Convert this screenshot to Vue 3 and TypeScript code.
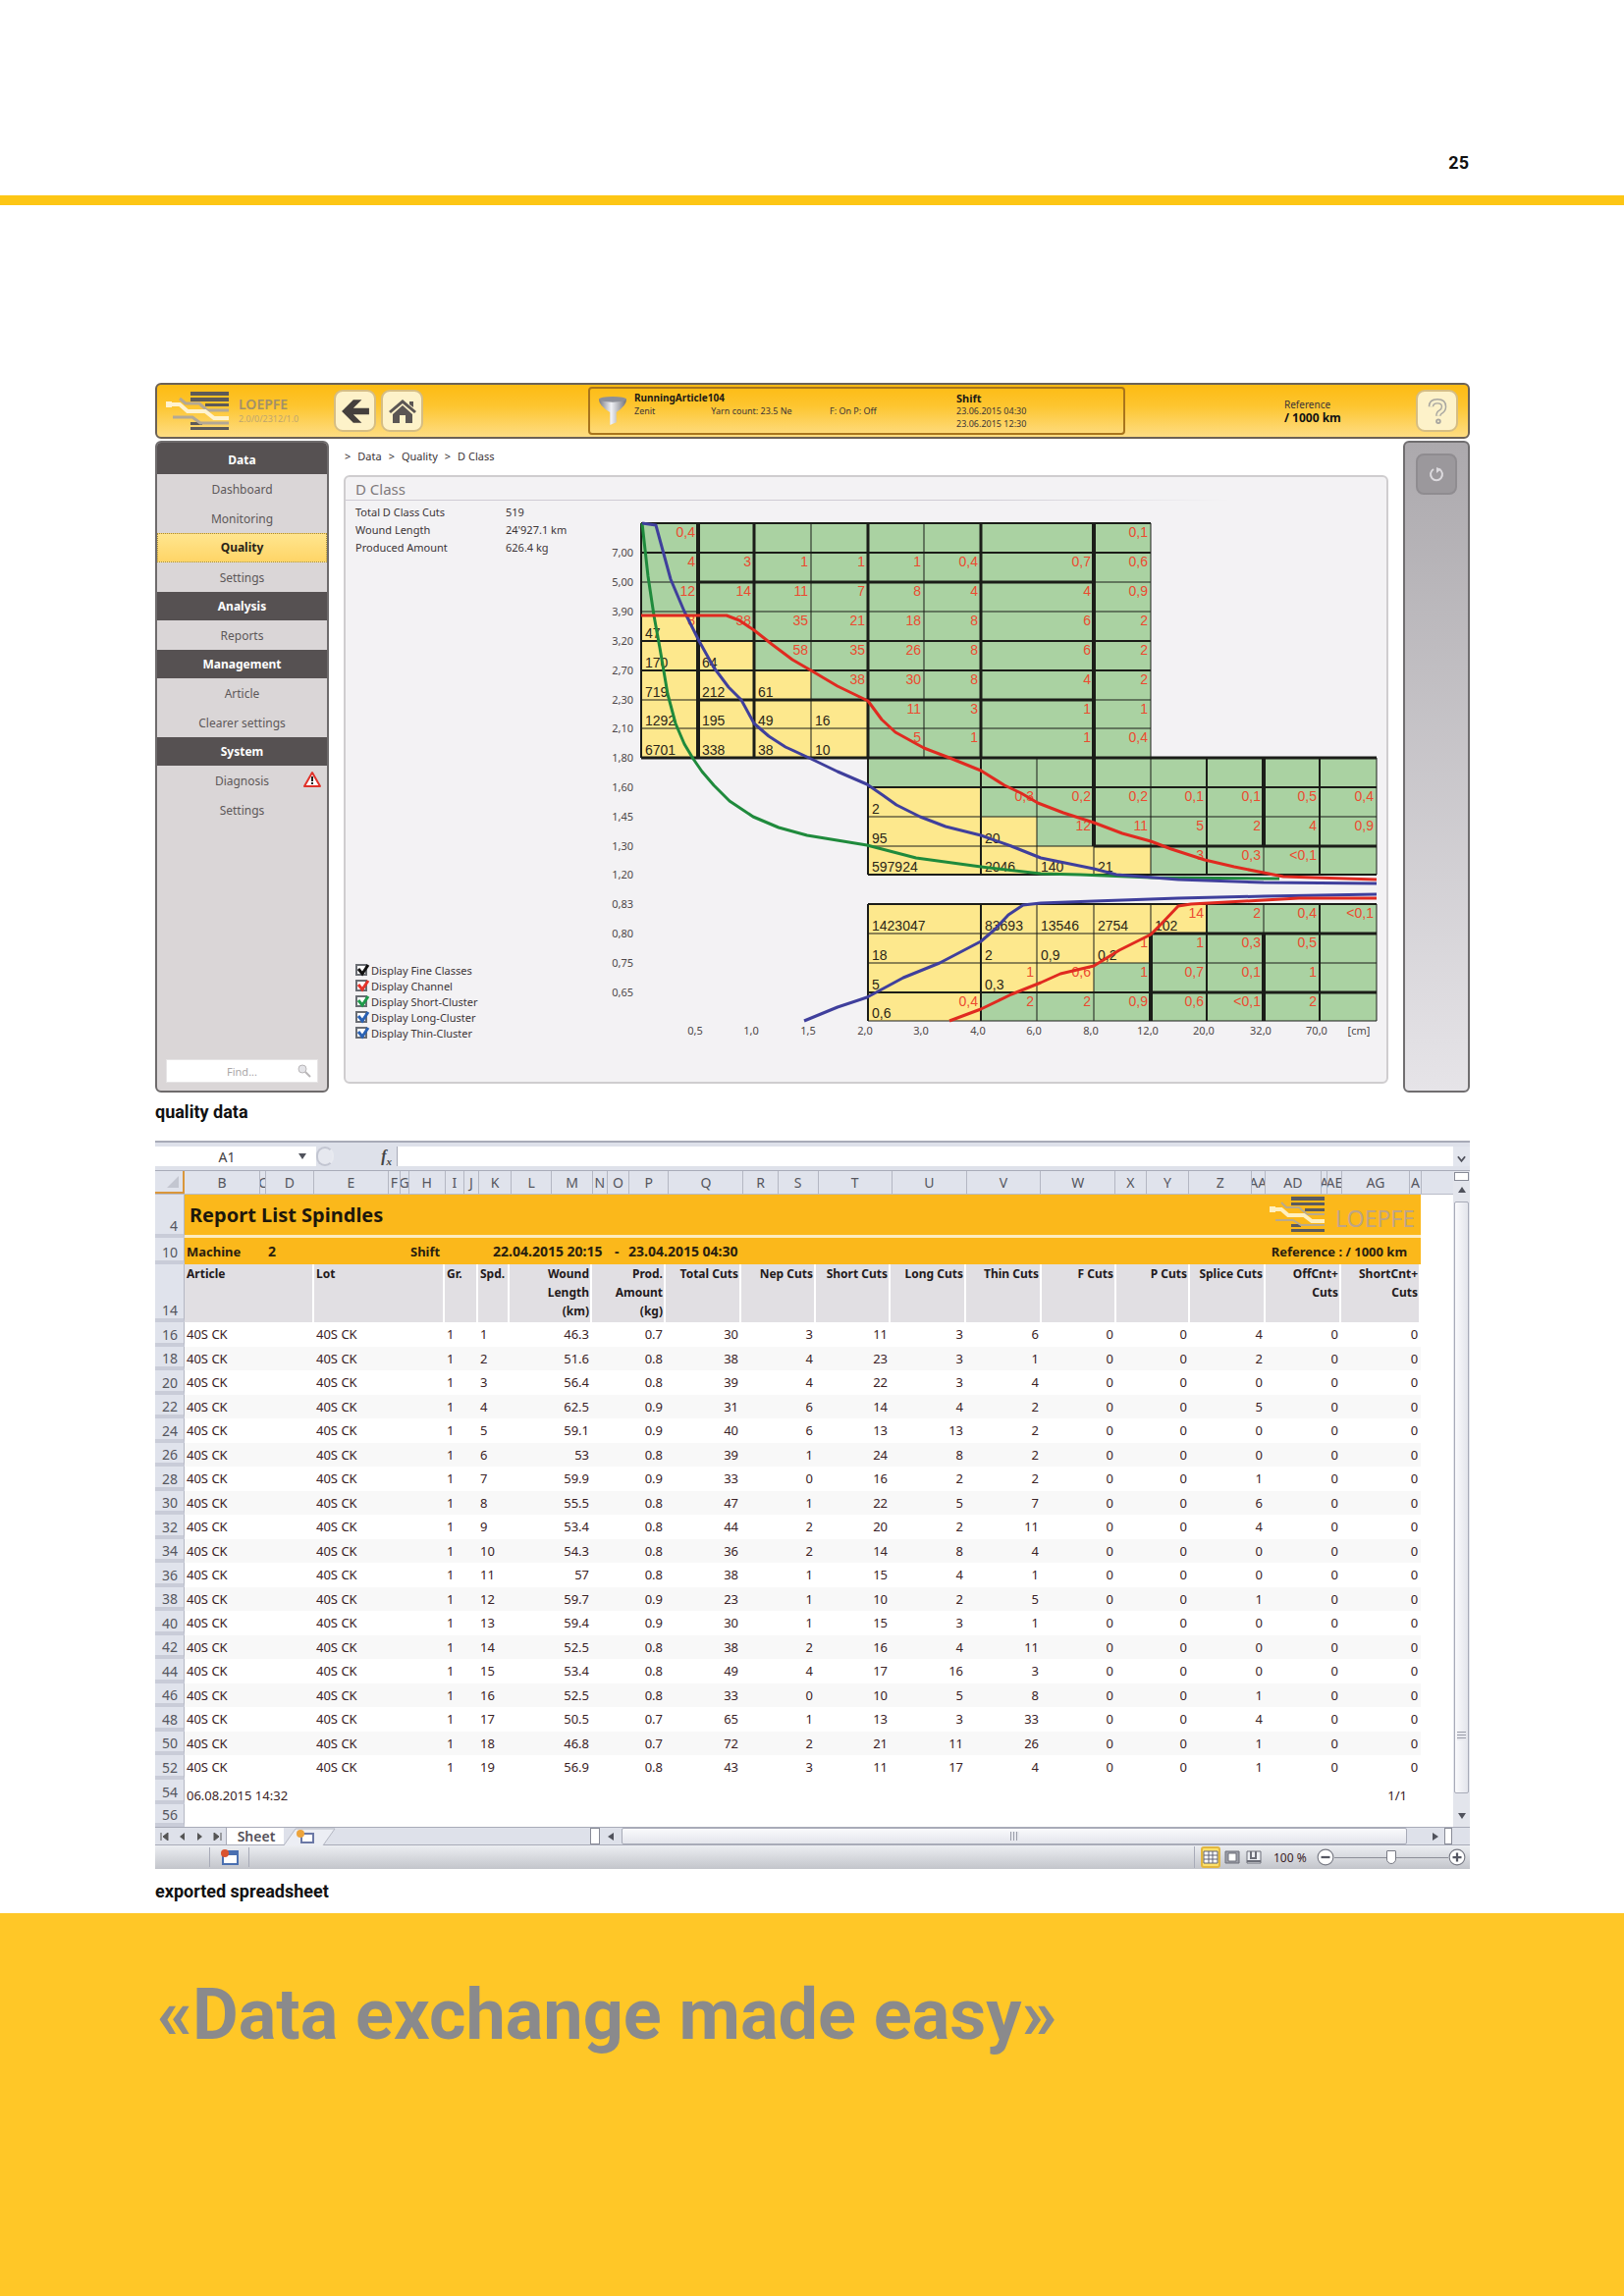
<script setup lang="ts">
import { ref } from 'vue'

interface NavItem { label: string; active?: boolean; warn?: boolean }
interface NavGroup { title: string; items: NavItem[] }

const nav: NavGroup[] = [
  { title: 'Data', items: [{ label: 'Dashboard' }, { label: 'Monitoring' }, { label: 'Quality', active: true }, { label: 'Settings' }] },
  { title: 'Analysis', items: [{ label: 'Reports' }] },
  { title: 'Management', items: [{ label: 'Article' }, { label: 'Clearer settings' }] },
  { title: 'System', items: [{ label: 'Diagnosis', warn: true }, { label: 'Settings' }] },
]

const totals = [
  ['Total D Class Cuts', '519'],
  ['Wound Length', "24'927.1 km"],
  ['Produced Amount', '626.4 kg'],
]

const layers = ref([
  { label: 'Display Fine Classes', color: '#111111', on: true },
  { label: 'Display Channel', color: '#e5352c', on: true },
  { label: 'Display Short-Cluster', color: '#1f9a4a', on: true },
  { label: 'Display Long-Cluster', color: '#2a62b5', on: true },
  { label: 'Display Thin-Cluster', color: '#2a62b5', on: true },
])

// Chart geometry: column edges and row edges of the class matrix
const X = [53, 111, 168, 226, 284, 341, 399, 456, 514, 572, 629, 687, 744, 802]
const Y = [23, 53, 83, 113, 143, 173, 203, 232, 262, 292, 322, 352, 381, 411, 441, 471, 501, 530]

const yLabels = ['7,00', '5,00', '3,90', '3,20', '2,70', '2,30', '2,10', '1,80', '1,60', '1,45', '1,30', '1,20', '0,83', '0,80', '0,75', '0,65']
const xLabels = ['0,5', '1,0', '1,5', '2,0', '3,0', '4,0', '6,0', '8,0', '12,0', '20,0', '32,0', '70,0']

type Box = [number, number, number, number] // x1, y1, x2, y2
const greens: Box[] = [[53, 23, 572, 262], [284, 262, 802, 381], [284, 411, 802, 530]]
const yellows: Box[] = [
  [53, 117, 111, 262], [111, 143, 168, 262], [168, 173, 226, 262], [226, 203, 284, 262],
  [284, 292, 399, 381], [399, 322, 456, 381], [456, 352, 572, 381],
  [284, 411, 629, 441], [284, 441, 572, 471], [284, 471, 514, 501], [284, 501, 399, 530],
]

type Line = [number, number, number, number, number] // x1, y1, x2, y2, stroke width
const lines: Line[] = [
  [53, 23, 53, 262, 2], [111, 23, 111, 262, 4], [168, 23, 168, 262, 3], [226, 23, 226, 262, 1], [284, 23, 284, 262, 3],
  [341, 23, 341, 262, 1], [399, 23, 399, 262, 3], [514, 23, 514, 352, 4], [572, 23, 572, 262, 1],
  [53, 23, 572, 23, 2], [53, 53, 572, 53, 2], [53, 83, 111, 83, 1], [111, 83, 514, 83, 3], [514, 83, 572, 83, 1],
  [53, 113, 572, 113, 1], [53, 143, 572, 143, 2], [53, 173, 572, 173, 2], [53, 203, 111, 203, 1], [111, 203, 514, 203, 3],
  [514, 203, 572, 203, 1], [53, 232, 572, 232, 1], [53, 262, 802, 262, 3],
  [284, 262, 284, 381, 2], [399, 262, 399, 381, 2], [456, 262, 456, 381, 1], [514, 352, 514, 381, 1], [572, 262, 572, 381, 1],
  [629, 262, 629, 381, 2], [687, 262, 687, 352, 4], [687, 352, 687, 381, 1], [744, 262, 744, 381, 2], [802, 262, 802, 381, 1],
  [284, 292, 802, 292, 2], [284, 322, 802, 322, 1], [284, 352, 514, 352, 1], [514, 352, 802, 352, 3], [284, 381, 802, 381, 2],
  [284, 411, 284, 530, 2], [399, 411, 399, 530, 2], [456, 411, 456, 530, 1], [514, 411, 514, 530, 1], [572, 411, 572, 441, 1],
  [572, 441, 572, 530, 4], [629, 411, 629, 530, 2], [687, 411, 687, 441, 1], [687, 441, 687, 530, 4], [744, 411, 744, 530, 2],
  [802, 411, 802, 530, 1],
  [284, 411, 802, 411, 2], [284, 441, 572, 441, 1], [572, 441, 802, 441, 3], [284, 471, 802, 471, 1], [284, 501, 572, 501, 2],
  [572, 501, 802, 501, 3], [284, 530, 802, 530, 1],
]

// Cut counts: [row, [right column edge, value]...]
const cuts: [number, [number, string][]][] = [
  [0, [[1, '0,4'], [9, '0,1']]],
  [1, [[1, '4'], [2, '3'], [3, '1'], [4, '1'], [5, '1'], [6, '0,4'], [8, '0,7'], [9, '0,6']]],
  [2, [[1, '12'], [2, '14'], [3, '11'], [4, '7'], [5, '8'], [6, '4'], [8, '4'], [9, '0,9']]],
  [3, [[1, '8'], [2, '38'], [3, '35'], [4, '21'], [5, '18'], [6, '8'], [8, '6'], [9, '2']]],
  [4, [[3, '58'], [4, '35'], [5, '26'], [6, '8'], [8, '6'], [9, '2']]],
  [5, [[4, '38'], [5, '30'], [6, '8'], [8, '4'], [9, '2']]],
  [6, [[5, '11'], [6, '3'], [8, '1'], [9, '1']]],
  [7, [[5, '5'], [6, '1'], [8, '1'], [9, '0,4']]],
  [9, [[7, '0,3'], [8, '0,2'], [9, '0,2'], [10, '0,1'], [11, '0,1'], [12, '0,5'], [13, '0,4']]],
  [10, [[8, '12'], [9, '11'], [10, '5'], [11, '2'], [12, '4'], [13, '0,9']]],
  [11, [[10, '3'], [11, '0,3'], [12, '<0,1']]],
  [13, [[10, '14'], [11, '2'], [12, '0,4'], [13, '<0,1']]],
  [14, [[9, '1'], [10, '1'], [11, '0,3'], [12, '0,5']]],
  [15, [[7, '1'], [8, '0,6'], [9, '1'], [10, '0,7'], [11, '0,1'], [12, '1']]],
  [16, [[6, '0,4'], [7, '2'], [8, '2'], [9, '0,9'], [10, '0,6'], [11, '<0,1'], [12, '2']]],
]

// Remaining faults: [row, [left column edge, value]...]
const faults: [number, [number, string][]][] = [
  [3, [[0, '47']]],
  [4, [[0, '170'], [1, '64']]],
  [5, [[0, '719'], [1, '212'], [2, '61']]],
  [6, [[0, '1292'], [1, '195'], [2, '49'], [3, '16']]],
  [7, [[0, '6701'], [1, '338'], [2, '38'], [3, '10']]],
  [9, [[4, '2']]],
  [10, [[4, '95'], [6, '20']]],
  [11, [[4, '597924'], [6, '2046'], [7, '140'], [8, '21']]],
  [13, [[4, '1423047'], [6, '83693'], [7, '13546'], [8, '2754'], [9, '102']]],
  [14, [[4, '18'], [6, '2'], [7, '0,9'], [8, '0,2']]],
  [15, [[4, '5'], [6, '0,3']]],
  [16, [[4, '0,6']]],
]

const curves = [
  { c: '#1f8a3c', p: '54,23 60,77 66,117 72,150 80,197 88,227 97,248 106,263 115,276 127,290 143,306 167,322 193,333 222,341 283,351 333,364 399,373 460,380 500,381 573,384 687,385 703,385' },
  { c: '#3f3f9c', p: '54,23 68,25 83,80 97,113 112,143 127,170 142,190 155,203 168,227 183,240 200,251 226,263 253,276 283,289 299,300 313,310 337,322 363,332 399,341 430,352 460,364 514,375 537,381 600,386 687,389 802,390' },
  { c: '#e02a20', p: '53,117 140,117 153,122 168,132 187,147 207,162 226,173 253,189 284,204 298,223 312,236 341,252 367,262 399,275 423,290 440,298 457,308 483,318 514,328 543,339 572,347 593,355 627,366 657,373 687,379 707,383 802,386' },
  { c: '#3f3f9c', p: '219,530 253,516 283,506 320,486 357,471 399,449 413,437 427,422 442,412 460,410 514,408 600,405 687,403 802,401' },
  { c: '#e02a20', p: '367,530 399,518 430,503 460,491 480,482 514,474 540,458 572,442 582,432 600,413 613,411 687,407 723,405 802,405' },
]

// Column letters with their relative widths
const letters: [string, number][] = [
  ['B', 78], ['C', 5], ['D', 49], ['E', 77], ['F', 11], ['G', 8], ['H', 37], ['I', 19], ['J', 14], ['K', 33], ['L', 41], ['M', 42],
  ['N', 14], ['O', 22], ['P', 40], ['Q', 77], ['R', 35], ['S', 41], ['T', 76], ['U', 77], ['V', 76], ['W', 77], ['X', 31],
  ['Y', 44], ['Z', 64], ['AA', 13], ['AD', 58], ['A', 5], ['AE', 14], ['AG', 70], ['A', 11], ['', 33],
]

const colWidths = [30, 132, 133, 34, 32, 84, 75, 77, 76, 76, 77, 77, 76, 75, 77, 77, 81, 33]
const heads = ['Article', 'Lot', 'Gr.', 'Spd.', 'Wound\nLength\n(km)', 'Prod.\nAmount\n(kg)', 'Total Cuts', 'Nep Cuts', 'Short Cuts', 'Long Cuts', 'Thin Cuts', 'F Cuts', 'P Cuts', 'Splice Cuts', 'OffCnt+\nCuts', 'ShortCnt+\nCuts']

const raw = [
  '46.3 0.7 30 3 11 3 6 0 0 4', '51.6 0.8 38 4 23 3 1 0 0 2', '56.4 0.8 39 4 22 3 4 0 0 0', '62.5 0.9 31 6 14 4 2 0 0 5',
  '59.1 0.9 40 6 13 13 2 0 0 0', '53 0.8 39 1 24 8 2 0 0 0', '59.9 0.9 33 0 16 2 2 0 0 1', '55.5 0.8 47 1 22 5 7 0 0 6',
  '53.4 0.8 44 2 20 2 11 0 0 4', '54.3 0.8 36 2 14 8 4 0 0 0', '57 0.8 38 1 15 4 1 0 0 0', '59.7 0.9 23 1 10 2 5 0 0 1',
  '59.4 0.9 30 1 15 3 1 0 0 0', '52.5 0.8 38 2 16 4 11 0 0 0', '53.4 0.8 49 4 17 16 3 0 0 0', '52.5 0.8 33 0 10 5 8 0 0 1',
  '50.5 0.7 65 1 13 3 33 0 0 4', '46.8 0.7 72 2 21 11 26 0 0 1', '56.9 0.8 43 3 11 17 4 0 0 1',
]
const rows = raw.map((r, i) => ({
  n: 16 + i * 2,
  cells: ['40S CK', '40S CK', '1', String(i + 1), ...r.split(' '), '0', '0'],
}))

const zoom = ref(50)
</script>

<template>
  <div class="page">
    <header class="page-top"><span class="page-no">25</span></header>
    <div class="stripe"></div>

    <main class="content">
      <section class="app">
        <div class="topbar">
          <div class="brand">
            <svg class="brand-mark" viewBox="0 0 66 42" aria-hidden="true">
              <g fill="#5d5a58"><rect x="26" y="1" width="39" height="4" /><rect x="26" y="7" width="39" height="4" /><rect x="41" y="13" width="24" height="3" /><rect x="26" y="32" width="12" height="3" /><rect x="26" y="37" width="39" height="3" /></g>
              <g fill="none" stroke="#b3a895" stroke-width="3"><path d="M15 8l6 5h14l8 7h22" /><path d="M8 27h20l8 6h29" /></g>
              <path d="M3 14h12l8 7h18l9 7h15" fill="none" stroke="#fff3cf" stroke-width="4" />
              <rect x="1" y="11" width="6" height="6" fill="#fff3cf" />
            </svg>
            <div class="brand-text"><strong>LOEPFE</strong><small>2.0/0/2312/1.0</small></div>
          </div>
          <button class="tb-btn" aria-label="Back">
            <svg viewBox="0 0 28 24"><path d="M12 1h8l-8 8h15v6H12l8 8h-8L1 12z" fill="#45403d" /></svg>
          </button>
          <button class="tb-btn" aria-label="Home">
            <svg viewBox="0 0 30 26"><path d="M15 1l14 12-2 2L15 5 3 15l-2-2z" fill="#5b5654" /><path d="M22 3h4v6l-4-3z" fill="#5b5654" /><path d="M15 7l10 9v9h-7v-8h-6v8H5v-9z" fill="#5b5654" /></svg>
          </button>
          <div class="article">
            <svg class="funnel" viewBox="0 0 32 34" aria-hidden="true">
              <defs><linearGradient id="fg"><stop offset="0" stop-color="#77787f" /><stop offset=".45" stop-color="#f1f2f6" /><stop offset="1" stop-color="#6f7079" /></linearGradient></defs>
              <path d="M1 4q0 7 12 14v14l7-3V18Q31 11 31 4z" fill="url(#fg)" /><ellipse cx="16" cy="4" rx="15" ry="3" fill="#8d8f98" />
            </svg>
            <div class="a-main">
              <strong>RunningArticle104</strong>
              <div class="a-sub"><span>Zenit</span><span>Yarn count: 23.5 Ne</span></div>
            </div>
            <span class="fp">F: On P: Off</span>
            <div class="shift"><strong>Shift</strong><span>23.06.2015 04:30</span><span>23.06.2015 12:30</span></div>
          </div>
          <div class="reference"><span>Reference</span><strong>/ 1000 km</strong></div>
          <button class="tb-btn help" aria-label="Help">
            <svg viewBox="0 0 24 28"><path d="M5 9q0-6 7-6t7 6q0 4-4 6-2 1-2 4" fill="none" stroke="#a8a6a0" stroke-width="6" /><path d="M5 9q0-6 7-6t7 6q0 4-4 6-2 1-2 4" fill="none" stroke="#f7efcb" stroke-width="3" /><circle cx="13" cy="25" r="2" fill="#f7efcb" stroke="#a8a6a0" stroke-width="2" /></svg>
          </button>
        </div>

        <div class="app-body">
          <nav class="side">
            <template v-for="g in nav" :key="g.title">
              <h3>{{ g.title }}</h3>
              <a v-for="i in g.items" :key="i.label" href="#" :class="{ active: i.active }">{{ i.label }}
                <svg v-if="i.warn" class="warn" viewBox="0 0 20 18"><path d="M10 2l8 14H2z" fill="#fff" stroke="#e0322a" stroke-width="2" stroke-linejoin="round" /><path d="M10 6v5M10 12v2" stroke="#222" stroke-width="2" /></svg>
              </a>
            </template>
            <div class="find">
              <input type="text" placeholder="Find..." aria-label="Find" />
              <svg viewBox="0 0 14 14" aria-hidden="true"><circle cx="5" cy="5" r="4" fill="#e4e4e8" stroke="#b9b6b8" /><path d="M8 8l5 5" stroke="#b9b6b8" stroke-width="2" /></svg>
            </div>
          </nav>

          <div class="main">
            <div class="crumbs"><span>&gt;</span><a href="#">Data</a><span>&gt;</span><a href="#">Quality</a><span>&gt;</span><a href="#">D Class</a></div>
            <div class="panel">
              <h2>D Class</h2>
              <div class="panel-body">
                <div class="info">
                  <dl><template v-for="t in totals" :key="t[0]"><dt>{{ t[0] }}</dt><dd>{{ t[1] }}</dd></template></dl>
                  <div class="layers">
                    <label v-for="l in layers" :key="l.label">
                      <span class="check"><input v-model="l.on" type="checkbox" /><svg v-if="l.on" viewBox="0 0 15 14"><path d="M3 6l4 5 6-9" fill="none" :stroke="l.color" stroke-width="3" /></svg></span>{{ l.label }}
                    </label>
                  </div>
                </div>
                <svg class="chart" viewBox="0 0 812 565">
                  <rect v-for="(b, k) in greens" :key="'g' + k" :x="b[0]" :y="b[1]" :width="b[2] - b[0]" :height="b[3] - b[1]" fill="#aad2a2" />
                  <rect v-for="(b, k) in yellows" :key="'y' + k" :x="b[0]" :y="b[1]" :width="b[2] - b[0]" :height="b[3] - b[1]" fill="#fde88d" />
                  <line v-for="(l, k) in lines" :key="'l' + k" :x1="l[0]" :y1="l[1]" :x2="l[2]" :y2="l[3]" :stroke-width="l[4]" stroke="#1b1d18" />
                  <g class="cuts"><template v-for="r in cuts" :key="r[0]"><text v-for="c in r[1]" :key="c[0]" :x="X[c[0]] - 3" :y="Y[r[0]] + 14">{{ c[1] }}</text></template></g>
                  <g class="faults"><template v-for="r in faults" :key="r[0]"><text v-for="c in r[1]" :key="c[0]" :x="X[c[0]] + 4" :y="Y[r[0] + 1] - 3">{{ c[1] }}</text></template></g>
                  <polyline v-for="(c, k) in curves" :key="'c' + k" :points="c.p" :stroke="c.c" fill="none" stroke-width="3" stroke-linejoin="round" />
                  <g class="ylab"><text v-for="(t, k) in yLabels" :key="t" x="45" :y="Y[k + 1] + 4">{{ t }}</text></g>
                  <g class="xlab"><text v-for="(t, k) in xLabels" :key="t" :x="X[k + 1] - 3" y="544">{{ t }}</text><text x="784" y="544">[cm]</text></g>
                </svg>
              </div>
            </div>
          </div>

          <aside class="tools">
            <button aria-label="Refresh"><svg viewBox="0 0 18 18"><path d="M12 4a6 6 0 1 1-6 0" fill="none" stroke="#dcdade" stroke-width="2" /><path d="M9 8V2l5 2z" fill="#dcdade" /></svg></button>
          </aside>
        </div>
      </section>
      <p class="caption first">quality data</p>

      <section class="excel">
        <div class="formula">
          <div class="name"><input value="A1" aria-label="Name box" /><i class="tri down"></i></div>
          <div class="fx"><i class="knob"></i><em>f<sub>x</sub></em></div>
          <input class="fx-in" aria-label="Formula" />
          <button class="fx-more" aria-label="Expand formula bar"><svg viewBox="0 0 10 8"><path d="M1 1l4 5 4-5" fill="none" stroke="#50525c" stroke-width="2" /></svg></button>
        </div>
        <div class="grid-area">
          <div class="grid-main">
            <div class="letters">
              <span class="corner"><svg viewBox="0 0 12 12"><path d="M12 0v12H0z" fill="#c3c6d0" /></svg></span>
              <span v-for="(l, k) in letters" :key="k" class="letter" :style="{ flexGrow: l[1] }">{{ l[0] }}</span>
            </div>
            <table>
              <colgroup><col v-for="(w, k) in colWidths" :key="k" :style="{ width: w + 'px' }" /></colgroup>
              <tbody>
                <tr class="r-title">
                  <th>4</th>
                  <td colspan="16">
                    <div class="bar"><h2>Report List Spindles</h2>
                      <svg class="x-mark" viewBox="0 0 57 37" aria-hidden="true">
                        <g fill="#5b5b5e"><rect x="22" y="0" width="34" height="4" /><rect x="22" y="6" width="34" height="3" /><rect x="36" y="12" width="20" height="3" /><rect x="22" y="28" width="10" height="3" /><rect x="22" y="33" width="34" height="3" /></g>
                        <g fill="none" stroke="#b9aa8d" stroke-width="2"><path d="M12 6l5 5h13l8 7h18" /><path d="M6 24h18l8 5h24" /></g>
                        <path d="M2 13h10l7 6h16l8 6h13" fill="none" stroke="#fff0c0" stroke-width="4" /><rect y="10" width="6" height="6" fill="#fff0c0" />
                      </svg>
                      <span class="x-brand">LOEPFE</span></div>
                  </td>
                  <td></td>
                </tr>
                <tr class="r-machine">
                  <th>10</th>
                  <td colspan="16">
                    <div class="bar"><span class="m1">Machine</span><span class="m2">2</span><span class="m3">Shift</span><span class="m4">22.04.2015 20:15</span><span class="m5">-</span><span>23.04.2015 04:30</span><span class="m6">Reference : / 1000 km</span></div>
                  </td>
                  <td></td>
                </tr>
                <tr class="r-head"><th>14</th><th v-for="(h, k) in heads" :key="h" scope="col" class="h" :class="{ l: k < 4 }">{{ h }}</th><td></td></tr>
                <tr v-for="r in rows" :key="r.n" class="r-data"><th>{{ r.n }}</th><td v-for="(c, k) in r.cells" :key="k" :class="{ l: k < 4 }">{{ c }}</td><td class="end"></td></tr>
                <tr class="r-foot"><th>54</th><td class="l" colspan="2">06.08.2015 14:32</td><td colspan="12"></td><td colspan="2" class="pg">1/1</td><td></td></tr>
                <tr class="r-last"><th>56</th><td colspan="17"></td></tr>
              </tbody>
            </table>
          </div>
          <div class="vscroll"><i class="split"></i><i class="tri up"></i><div class="thumb"><i class="grip"></i></div><i class="tri down"></i></div>
        </div>
        <div class="tabs">
          <div class="tabnav">
            <button aria-label="First sheet"><svg viewBox="0 0 9 8"><path d="M1 0v8M8 0v8L3 4z" fill="#555" stroke="#555" stroke-width="1" /></svg></button>
            <button aria-label="Previous sheet"><svg viewBox="0 0 9 8"><path d="M7 0v8L2 4z" fill="#555" /></svg></button>
            <button aria-label="Next sheet"><svg viewBox="0 0 9 8"><path d="M2 0v8l5-4z" fill="#555" /></svg></button>
            <button aria-label="Last sheet"><svg viewBox="0 0 9 8"><path d="M8 0v8M1 0v8l5-4z" fill="#555" stroke="#555" stroke-width="1" /></svg></button>
          </div>
          <button class="sheet">Sheet</button>
          <svg class="newtab" viewBox="0 0 54 18" aria-hidden="true"><path d="M0 18L12 1h40L40 18" fill="#eceef4" stroke="#b4b7c2" /><rect x="18" y="6" width="12" height="9" fill="#fff" stroke="#6b78a6" stroke-width="2" /><circle cx="17" cy="6" r="4" fill="#eda43c" /></svg>
          <div class="filler"></div>
          <div class="hscroll"><i class="split"></i><i class="tri left"></i><div class="thumb"><i class="grip"></i></div><i class="tri right"></i><i class="split"></i></div>
        </div>
        <div class="status">
          <span class="macro"><svg viewBox="0 0 18 16"><rect x="2" y="2" width="15" height="13" fill="#fff" stroke="#4a6fb0" stroke-width="2" /><rect x="2" y="2" width="15" height="4" fill="#4a6fb0" /><circle cx="4" cy="4" r="4" fill="#d9532f" /></svg></span>
          <div class="views">
            <button class="on" aria-label="Normal view"><svg viewBox="0 0 16 14"><path d="M1 1h14v12H1zM1 5h14M1 9h14M6 1v12M10 1v12" fill="#fff" stroke="#5e6072" /></svg></button>
            <button aria-label="Page layout"><svg viewBox="0 0 16 14"><path d="M1 1h14v12H1z" fill="#9c9ea8" stroke="#6c6e78" /><path d="M4 3h8v8H4z" fill="#fff" stroke="#6c6e78" /></svg></button>
            <button aria-label="Page break preview"><svg viewBox="0 0 16 14"><path d="M1 1h14v12H1z" fill="#eceef2" stroke="#6c6e78" /><path d="M5 1v7h5V1M1 11h14" fill="none" stroke="#6c6e78" stroke-width="2" /></svg></button>
          </div>
          <span class="pct">100 %</span>
          <button class="round" aria-label="Zoom out"><svg viewBox="0 0 16 16"><circle cx="8" cy="8" r="7" fill="#fff" stroke="#777983" /><path d="M4 8h8" stroke="#555762" stroke-width="2" /></svg></button>
          <input v-model="zoom" class="zoom" type="range" min="0" max="100" aria-label="Zoom" />
          <button class="round" aria-label="Zoom in"><svg viewBox="0 0 16 16"><circle cx="8" cy="8" r="7" fill="#fff" stroke="#777983" /><path d="M4 8h8M8 4v8" stroke="#555762" stroke-width="2" /></svg></button>
        </div>
      </section>
      <p class="caption second">exported spreadsheet</p>
    </main>

    <footer class="claim"><h1>«Data exchange made easy»</h1></footer>
  </div>
</template>

<style>
body { background: #fff; }
</style>

<style scoped>
* { box-sizing: border-box; }
h1, h2, h3, p, dl, dd { margin: 0; }
button { border: 0; padding: 0; background: none; font: inherit; color: inherit; }
a { color: inherit; text-decoration: none; }
i { display: block; }
.page { display: flex; flex-direction: column; min-height: 100vh; font-family: "Noto Sans", "Open Sans", sans-serif; color: #3b3436; }
.page-top { height: 199px; padding: 154px 158px 0; text-align: right; }
.page-no { font: bold 18px/24px Roboto, sans-serif; color: #111; }
.stripe { height: 10px; background: #fdc615; }
.content { padding: 181px 157px 0 158px; }
.caption { font: bold 18px/24px Roboto, sans-serif; color: #111; }
.first { margin: 8px 0 17px; }
.second { margin: 11px 0 10px; }

/* Quality application */
.topbar { display: flex; align-items: center; height: 57px; border: 2px solid #6b6156; border-radius: 6px; background: linear-gradient(#fdbb12, #fdc52f 40%, #fedd83); }
.brand { display: flex; align-items: center; gap: 9px; width: 180px; padding-left: 8px; }
.brand-mark { width: 66px; height: 42px; }
.brand-text { display: flex; flex-direction: column; color: #a29069; line-height: 15px; }
.brand-text strong { font-size: 14px; font-weight: 600; }
.brand-text small { font-size: 9px; color: #bea670; }
.tb-btn { display: flex; align-items: center; justify-content: center; width: 43px; height: 43px; margin-right: 5px; border: 2px solid #d5bd84; border-radius: 9px; background: #fdf2c9; }
.tb-btn svg { width: 30px; height: 26px; }
.help { margin: 0 10px 0 0; }
.article { display: flex; align-items: center; flex: 0 1 547px; height: 49px; margin-left: 163px; padding-left: 8px; border: 2px solid #a8741c; border-radius: 4px; font-size: 9px; line-height: 13px; }
.funnel { width: 30px; height: 34px; margin-right: 7px; }
.a-main { width: 199px; padding-bottom: 13px; }
.a-main strong { font-size: 10px; color: #221a14; }
.a-sub { display: flex; gap: 57px; }
.shift { display: flex; flex-direction: column; margin-left: 80px; }
.fp { width: 49px; white-space: nowrap; }
.shift strong { font-size: 11px; color: #221a14; }
.reference { display: flex; flex-direction: column; margin: 0 auto 0 162px; font-size: 10px; line-height: 14px; white-space: nowrap; }
.reference strong { font-size: 12px; color: #111; }
.app-body { display: flex; gap: 15px; height: 664px; margin-top: 2px; }
.side { display: flex; flex-direction: column; flex: 0 0 177px; border: 2px solid #6e6b6c; border-radius: 6px; background: #dad6d7; overflow: hidden; font-size: 12px; text-align: center; }
.side h3 { height: 29px; background: #565152; color: #fff; font-size: 12px; line-height: 30px; }
.side h3:first-child { height: 32px; line-height: 36px; }
.side a { position: relative; height: 30px; line-height: 32px; color: #5d5859; }
.side a.active { border: 1px dotted #a58b3a; background: linear-gradient(#ffe58e, #ffd567); line-height: 28px; font-weight: bold; color: #2a2419; }
.warn { position: absolute; right: 5px; top: 5px; width: 20px; height: 18px; }
.find { display: flex; align-items: center; height: 24px; margin: auto 9px 8px; padding: 0 6px 0 20px; border: 1px solid #e6e4e5; background: #fff; }
.find input { flex: 1; min-width: 0; border: 0; padding: 0; outline: 0; font: 11px "Noto Sans", sans-serif; text-align: center; }
.find input::placeholder { color: #aaa6a8; }
.find svg { width: 14px; height: 14px; }
.main { display: flex; flex-direction: column; flex: 1; min-width: 0; padding-bottom: 9px; }
.crumbs { display: flex; gap: 7px; height: 35px; padding-left: 1px; font-size: 11px; line-height: 32px; }
.panel { flex: 1; border: 2px solid #cfcdcf; border-radius: 6px; background: #f3f2f4; }
.panel h2 { height: 24px; padding-left: 10px; border-bottom: 1px solid; border-image: linear-gradient(90deg, #cfccd4 60%, #f3f2f4 85%) 1; font-size: 15px; font-weight: normal; line-height: 24px; color: #7e797b; }
.panel-body { display: flex; height: calc(100% - 24px); }
.info { display: flex; flex-direction: column; justify-content: space-between; flex: 0 0 248px; padding: 3px 0 42px 10px; }
dl { display: grid; grid-template-columns: 153px 1fr; font-size: 11px; line-height: 18px; }
.layers { display: flex; flex-direction: column; font-size: 11px; }
.layers label { display: flex; align-items: center; gap: 1px; height: 16px; }
.check { display: grid; width: 15px; height: 14px; }
.check > * { grid-area: 1 / 1; }
.check input { appearance: none; width: 12px; height: 12px; margin: 1px 0 0; border: 2px solid #6a6d73; background: #fff; }
.check svg { pointer-events: none; }
.chart { display: block; flex: 1; min-width: 0; align-self: flex-start; }
.cuts, .faults { font: 14px "Liberation Sans", sans-serif; }
.cuts { fill: #ec4a30; text-anchor: end; }
.faults { fill: #2b2617; }
.ylab, .xlab { font-size: 11px; fill: #4d4748; }
.ylab { text-anchor: end; }
.xlab { text-anchor: middle; }
.tools { flex: 0 0 68px; padding: 11px 11px; border: 2px solid #706e70; border-radius: 6px; background: linear-gradient(#aca9ad, #e6e4e8); }
.tools button { display: flex; align-items: center; justify-content: center; width: 42px; height: 42px; border: 2px solid #8f8c90; border-radius: 8px; background: #9b989c; }
.tools svg { width: 18px; height: 18px; }

/* Spreadsheet window */
.excel { color: #3a2226; }
.formula { display: flex; height: 31px; padding: 4px 0; border-top: 2px solid #a8abb8; border-bottom: 1px solid #a8abb8; background: #dee1ea; }
.name { display: flex; align-items: center; width: 164px; background: #fff; }
.name input { width: 146px; padding: 0; border: 0; font: 14px "Noto Sans", sans-serif; text-align: center; color: #444; background: none; }
.tri { flex: none; width: 0; height: 0; border: 4px solid transparent; }
.tri.down { border-top: 6px solid #50525c; border-bottom: 0; }
.tri.up { border-bottom: 6px solid #50525c; border-top: 0; }
.tri.left { border-right: 6px solid #50525c; border-left: 0; }
.tri.right { border-left: 6px solid #50525c; border-right: 0; }
.fx { display: flex; align-items: center; justify-content: space-between; width: 83px; padding-right: 5px; border-right: 1px solid #a8abb8; }
.knob { width: 18px; height: 20px; border: 2px solid #c2c5d1; border-right-color: #e8eaf0; border-radius: 10px; background: #e6e8ef; }
.fx em { font: italic bold 16px/18px "Liberation Serif", serif; color: #444; }
.fx sub { font-size: 11px; line-height: 0; }
.fx-in { flex: 1; min-width: 0; border: 0; background: #fff; }
.fx-more { width: 17px; background: #e3e6ee; }
.fx-more svg { width: 9px; height: 8px; }
.grid-area { display: flex; }
.grid-main { flex: 1; min-width: 0; }
.letters { display: flex; height: 24px; border-bottom: 1px solid #b9bcc8; background: #e0e3ec; color: #55565e; font-size: 14px; line-height: 24px; }
.corner { display: flex; justify-content: flex-end; align-items: flex-end; flex: 0 0 30px; padding: 4px; border-right: 2px solid #d9963b; border-bottom: 2px solid #d9963b; }
.corner svg { width: 12px; height: 12px; }
.letter { display: flex; justify-content: center; flex: 1 1 0; min-width: 0; overflow: hidden; border-right: 1px solid #b4b7c3; }
.letter:last-child { border-right: 0; }
table { width: 100%; table-layout: fixed; border-collapse: separate; border-spacing: 0; font-size: 12px; line-height: 18px; }
td, th { padding: 0 3px 0 0; text-align: right; white-space: pre; }
th:first-child { padding-right: 6px; border-right: 1px solid #b4b7c3; border-bottom: 4px solid #c9ccd8; background: #e0e3ec; font-size: 14px; font-weight: normal; line-height: 16px; color: #55565e; vertical-align: bottom; }
.l { padding: 0 0 0 2px; text-align: left; }
.bar { display: flex; align-items: center; height: 100%; font-weight: bold; color: #29200f; }
.r-title { height: 44px; }
.r-title td:nth-child(2) { height: 44px; padding: 0 6px 0 5px; border-bottom: 3px solid #fdecc0; background: #fbb81b; }
.r-title h2 { flex: 1; font-size: 20px; line-height: 30px; color: #1d170c; text-align: left; }
.x-mark { width: 57px; height: 37px; }
.x-brand { margin-left: 10px; padding-top: 6px; font-size: 23px; line-height: 24px; font-weight: normal; color: #bda488; }
.r-machine { height: 27px; font-size: 14px; }
.r-machine td:nth-child(2) { height: 27px; padding: 0 14px 0 2px; background: #fbb81b; }
.m1 { width: 83px; text-align: left; font-size: 13px; }
.m2 { width: 145px; text-align: left; }
.m3 { width: 84px; text-align: left; font-size: 13px; }
.m4 { width: 124px; text-align: left; }
.m5 { width: 14px; text-align: left; }
.m6 { margin-left: auto; font-size: 13px; }
.r-head { height: 59px; }
.r-head .h { border-right: 2px solid #fff; background: #e1dfe3; font-size: 12px; line-height: 19px; vertical-align: top; color: #231a1c; }
.r-head .h:not(.l) { padding-right: 1px; }
.r-data { height: 25px; font-size: 13px; }
.r-data td { padding-bottom: 1px; }
.r-data:nth-child(odd) { height: 24px; }
.r-data:nth-child(odd) td:not(.end) { background: #f8f8f8; }
.r-foot { height: 25px; }
.r-foot td { vertical-align: bottom; font-size: 13px; }
.r-foot .pg { padding-right: 14px; }
.r-last { height: 23px; }
.vscroll { display: flex; flex-direction: column; align-items: center; flex: 0 0 17px; padding-bottom: 8px; background: #e3e5ec; }
.split { flex: none; border: 1px solid #888b97; background: #fff; }
.vscroll .split { width: 15px; height: 9px; margin: 1px 0 6px; }
.vscroll .thumb { flex: 1; width: 15px; margin: 9px 0 20px; }
.thumb { display: flex; align-items: center; justify-content: center; border: 1px solid #a8abb8; border-radius: 2px; background: linear-gradient(90deg, #fafafc, #e3e5ec); }
.vscroll .thumb { align-items: flex-end; padding-bottom: 53px; }
.grip { width: 9px; height: 9px; background: repeating-linear-gradient(#9a9da9 0 1px, #e8e9ef 1px 3px); }
.tabs { display: flex; height: 19px; border-top: 1px solid #a8abb8; border-bottom: 1px solid #a8abb8; background: #dee1ea; }
.tabnav { display: flex; align-items: center; justify-content: space-around; width: 73px; border-right: 1px solid #a8abb8; }
.tabnav button { display: flex; }
.tabnav svg { width: 9px; height: 8px; }
.sheet { width: 58px; padding-left: 2px; background: #fff; font-size: 14px; font-weight: 600; line-height: 17px; color: #55525a; text-align: center; }
.newtab { width: 54px; height: 18px; }
.filler { flex: 1; }
.hscroll { display: flex; align-items: center; flex: 0 1 896px; }
.hscroll .split { width: 10px; height: 17px; }
.hscroll .left { margin: 0 8px; }
.hscroll .thumb { flex: 1; height: 17px; background: linear-gradient(#fafafc, #e3e5ec); }
.hscroll .grip { background: repeating-linear-gradient(90deg, #9a9da9 0 1px, #e8e9ef 1px 3px); }
.hscroll .right { margin: 0 6px 0 26px; }
.hscroll .split:last-child { width: 8px; margin-right: 18px; }
.status { display: flex; align-items: center; height: 24px; background: linear-gradient(#eceef2, #c3c5cb); font-size: 12px; }
.macro { display: flex; justify-content: center; align-items: center; width: 41px; height: 20px; margin-left: 55px; border: solid #a8abb8; border-width: 0 1px; }
.macro svg { width: 18px; height: 16px; }
.views { display: flex; gap: 2px; margin-left: auto; padding-left: 6px; border-left: 1px solid #a8abb8; }
.views button { display: flex; align-items: center; justify-content: center; width: 20px; height: 22px; border-radius: 3px; }
.views .on { border: 2px solid #e2b63e; background: #fde06a; }
.views svg { width: 16px; height: 14px; }
.pct { width: 54px; padding-left: 10px; white-space: nowrap; }
.round { display: flex; }
.round svg { width: 18px; height: 18px; }
.zoom { appearance: none; width: 116px; height: 18px; margin: 0; background: linear-gradient(#8c8e98, #8c8e98) center / 100% 1px no-repeat; }
.zoom::-webkit-slider-thumb { appearance: none; width: 10px; height: 14px; border: 1px solid #777983; border-radius: 1px 1px 5px 5px; background: #fff; }
.round:last-child { margin-right: 4px; }

/* Claim */
.claim { flex: 1; min-height: 391px; padding: 56px 160px 0; background: #ffc727; }
.claim h1 { font: bold 72px/96px Roboto, sans-serif; color: #8a8a8c; }
</style>
